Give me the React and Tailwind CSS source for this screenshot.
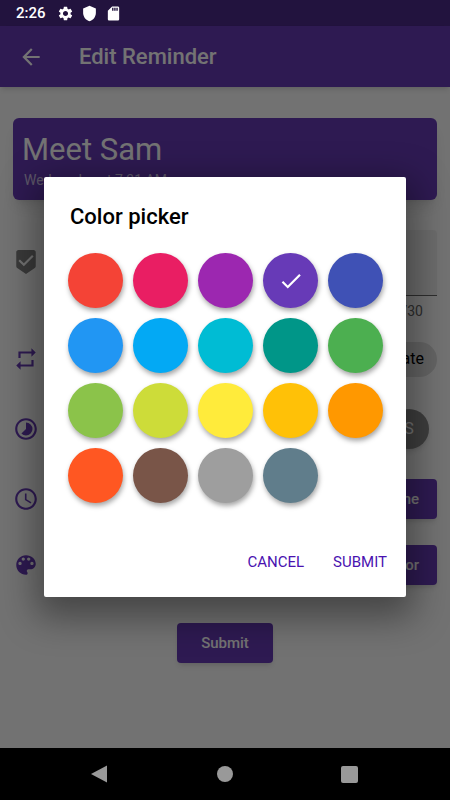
import { MdAccessTime, MdArrowBack, MdBeenhere, MdCheck, MdRepeat, MdSdCard, MdSettings, MdShield, MdTimelapse } from 'react-icons/md';

const colors = [
    { name: 'Red', bg: 'bg-[#f44336]' },
    { name: 'Pink', bg: 'bg-[#e91e63]' },
    { name: 'Purple', bg: 'bg-[#9c27b0]' },
    { name: 'Deep purple', bg: 'bg-[#673ab7]', selected: true },
    { name: 'Indigo', bg: 'bg-[#3f51b5]' },
    { name: 'Blue', bg: 'bg-[#2196f3]' },
    { name: 'Light blue', bg: 'bg-[#03a9f4]' },
    { name: 'Cyan', bg: 'bg-[#00bcd4]' },
    { name: 'Teal', bg: 'bg-[#009688]' },
    { name: 'Green', bg: 'bg-[#4caf50]' },
    { name: 'Light green', bg: 'bg-[#8bc34a]' },
    { name: 'Lime', bg: 'bg-[#cddc39]' },
    { name: 'Yellow', bg: 'bg-[#ffeb3b]' },
    { name: 'Amber', bg: 'bg-[#ffc107]' },
    { name: 'Orange', bg: 'bg-[#ff9800]' },
    { name: 'Deep orange', bg: 'bg-[#ff5722]' },
    { name: 'Brown', bg: 'bg-[#795548]' },
    { name: 'Grey', bg: 'bg-[#9e9e9e]' },
    { name: 'Blue grey', bg: 'bg-[#607d8b]' },
];

function PaletteIcon({ className }) {
    return (
        <svg className={className} viewBox="0 0 24 24" fill="currentColor">
            <path d="M12 3c-4.97 0-9 4.03-9 9s4.03 9 9 9c.83 0 1.5-.67 1.5-1.5 0-.39-.15-.74-.39-1.01-.23-.26-.38-.61-.38-.99 0-.83.67-1.5 1.5-1.5H16c2.76 0 5-2.24 5-5 0-4.42-4.03-8-9-8zm-5.5 9c-.83 0-1.5-.67-1.5-1.5S5.67 9 6.5 9 8 9.67 8 10.5 7.33 12 6.5 12zm3-4C8.67 8 8 7.33 8 6.5S8.67 5 9.5 5s1.5.67 1.5 1.5S10.33 8 9.5 8zm5 0c-.83 0-1.5-.67-1.5-1.5S13.67 5 14.5 5s1.5.67 1.5 1.5S15.33 8 14.5 8zm3 4c-.83 0-1.5-.67-1.5-1.5S16.67 9 17.5 9s1.5.67 1.5 1.5-.67 1.5-1.5 1.5z" />
        </svg>
    );
}

function StatusBar() {
    return (
        <div className="flex items-center h-[26px] px-4 bg-[#22133e] text-white">
            <span className="text-[15px] font-medium leading-none w-[41px]">2:26</span>
            <div className="flex items-center gap-[7px]">
                <MdSettings className="w-[17px] h-[17px]" />
                <MdShield className="w-[17px] h-[17px]" />
                <MdSdCard className="w-[17px] h-[17px]" />
            </div>
        </div>
    );
}

function RaisedButton({ className, children }) {
    return (
        <button type="button" className={`h-10 rounded-sm bg-[#673ab7] text-white text-[15px] font-medium shadow-md ${className}`}>
            {children}
        </button>
    );
}

function Row({ icon: Icon, className, children }) {
    return (
        <div className={`flex items-center justify-between ${className}`}>
            <Icon className="w-[26px] h-[26px] text-[#673ab7]" />
            {children}
        </div>
    );
}

function EditReminder() {
    return (
        <div className="flex-1 flex flex-col bg-[#fdfdfd]">
            <header className="flex items-center h-[61px] px-[18px] bg-[#673ab7] text-white shadow-md">
                <button type="button" aria-label="Back">
                    <MdArrowBack className="w-[26px] h-[26px]" />
                </button>
                <h1 className="ml-[35px] text-[22px] leading-[33px] font-medium">Edit Reminder</h1>
            </header>

            <main className="flex-1 flex flex-col px-[13px] pt-[31px]">
                <section className="h-[82px] px-[9px] pt-3 rounded-md bg-[#673ab7] text-white shadow-lg">
                    <h2 className="text-[31px] leading-10">Meet Sam</h2>
                    <p className="pl-[2px] mt-0.5 text-sm leading-4 text-white/70">Wednesday at 7:31 AM</p>
                </section>

                <div className="flex items-start justify-between mt-[30px]">
                    <MdBeenhere className="w-[26px] h-[26px] mt-[19px] text-[#808080]" />
                    <div className="w-[370px]">
                        <input
                            type="text"
                            aria-label="Title"
                            defaultValue="Meet Sam"
                            className="block w-full h-[66px] px-3 rounded-t-sm bg-[#f0f0f0] border-b border-[#666666] text-base"
                        />
                        <p className="pr-[14px] mt-[7px] text-right text-sm leading-4 text-[#666666]">8/30</p>
                    </div>
                </div>

                <Row icon={MdRepeat} className="h-9 mt-[22px]">
                    <button type="button" className="h-[35px] px-[13px] rounded-full bg-[#dedede] text-black text-base">
                        Select date
                    </button>
                </Row>

                <Row icon={MdTimelapse} className="h-10 mt-8 pr-2">
                    <button type="button" className="w-10 h-10 rounded-full bg-[#8a8a8a] text-white text-base shadow-md">
                        S
                    </button>
                </Row>

                <Row icon={MdAccessTime} className="h-10 mt-[30px]">
                    <RaisedButton className="px-[18px]">Select Time</RaisedButton>
                </Row>

                <Row icon={PaletteIcon} className="h-10 mt-[26px]">
                    <RaisedButton className="px-[18px]">Select Color</RaisedButton>
                </Row>

                <div className="flex justify-center mt-[38px]">
                    <RaisedButton className="px-6">Submit</RaisedButton>
                </div>
            </main>
        </div>
    );
}

function ColorPicker() {
    return (
        <div
            role="dialog"
            aria-labelledby="picker-title"
            className="w-full px-6 pt-6 pb-[17px] rounded-xs bg-white shadow-[0_12px_36px_8px_rgba(0,0,0,0.4)]"
        >
            <h2 id="picker-title" className="pl-0.5 text-[22px] leading-8 font-medium text-black">Color picker</h2>

            <div className="grid grid-cols-[repeat(5,55px)] gap-2.5 mt-5">
                {colors.map((color) => (
                    <button
                        key={color.name}
                        type="button"
                        aria-label={color.name}
                        className={`flex items-center justify-center h-[55px] rounded-full text-white shadow-[1px_3px_5px_rgba(0,0,0,0.35)] ${color.bg}`}
                    >
                        {color.selected && <MdCheck className="w-[26px] h-[26px]" />}
                    </button>
                ))}
            </div>

            <div className="flex justify-end gap-[13px] mt-[41px] -mr-[13px]">
                <button type="button" className="h-9 px-2 text-[15px] text-[#4a12b0]">CANCEL</button>
                <button type="button" className="h-9 px-2 text-[15px] text-[#4a12b0]">SUBMIT</button>
            </div>
        </div>
    );
}

function NavBar() {
    return (
        <nav className="flex items-center justify-between h-[52px] pl-[90px] pr-[92px] bg-black text-[#999999]">
            <button type="button" aria-label="Back">
                <svg className="w-[18px] h-[18px]" viewBox="0 0 18 18" fill="currentColor">
                    <path d="M17 0.5v17L1 9z" />
                </svg>
            </button>
            <button type="button" aria-label="Home" className="w-4 h-4 rounded-full bg-[#999999]"></button>
            <button type="button" aria-label="Recents" className="w-[17px] h-[17px] rounded-xs bg-[#999999]"></button>
        </nav>
    );
}

export default function App() {
    return (
        <div className="min-h-screen flex flex-col font-[Roboto,sans-serif]">
            <StatusBar />
            <div className="relative flex-1 flex flex-col">
                <EditReminder />
                {/* Scrim */}
                <div className="absolute inset-0 flex items-center justify-center px-11 bg-black/55 overflow-hidden">
                    <ColorPicker />
                </div>
            </div>
            <NavBar />
        </div>
    );
}
